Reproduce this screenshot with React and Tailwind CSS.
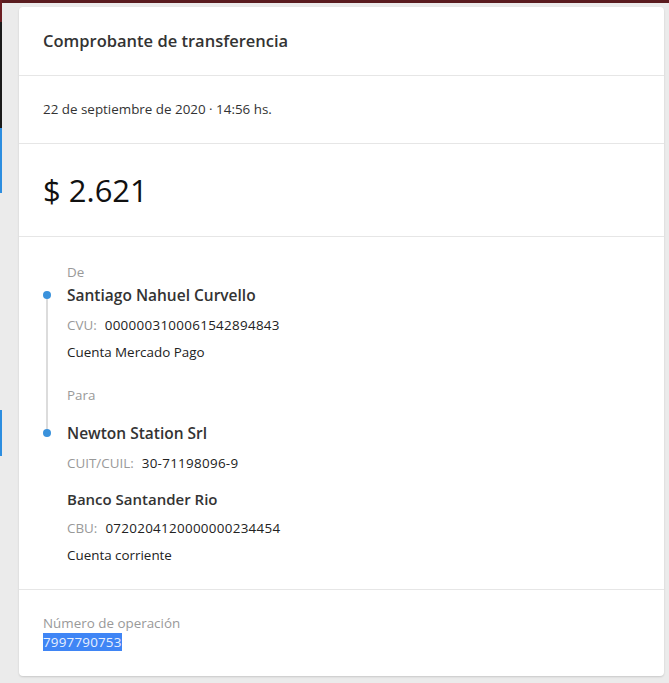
import React from "react";

export default function App() {
  const font = { fontFamily: '"Open Sans", "Liberation Sans", sans-serif' };
  return (
    <div className="w-[669px] h-[683px] bg-[#ebebeb] overflow-hidden relative" style={font}>
      <div className="h-[3px] bg-[#5a1c1f]" />
      <div className="absolute left-0 top-0 w-[2px] h-[22px] bg-[#6b1d22]" />
      <div className="absolute left-0 top-[22px] w-[2px] h-[106px] bg-[#1a1a1a]" />
      <div className="absolute left-0 top-[128px] w-[2px] h-[65px] bg-[#2d8ee0]" />
      <div className="absolute left-0 top-[410px] w-[2px] h-[46px] bg-[#2d8ee0]" />
      <div className="ml-[19px] mt-[4px] w-[645px] h-[669px] bg-white rounded-[4px] shadow-[0_1px_2px_rgba(0,0,0,0.15)] flex flex-col">
        <div className="h-[69px] border-b border-[#e6e6e6] flex items-center px-[24px] text-[16.5px] font-semibold text-[#333]">
          Comprobante de transferencia
        </div>
        <div className="h-[68px] border-b border-[#e6e6e6] flex items-center px-[24px] text-[13.4px] text-[#333]">
          22 de septiembre de 2020 · 14:56 hs.
        </div>
        <div className="h-[93px] border-b border-[#e6e6e6] flex items-center px-[24px] text-[31px] text-[#111]">
          $ 2.621
        </div>
        <div className="h-[353px] border-b border-[#e6e6e6] relative pl-[48px] pt-[26px]">
          <div className="absolute left-[27px] top-[56px] w-[2px] h-[138px] bg-[#dcdcdc]" />
          <div className="text-[13.4px] text-[#999] leading-[18px]">De</div>
          <div className="relative mt-[3px] text-[15.5px] font-semibold text-[#333] leading-[22px]">
            <span className="absolute left-[-24px] top-[7px] w-[8px] h-[8px] rounded-full bg-[#3a92dc]" />
            Santiago Nahuel Curvello
          </div>
          <div className="mt-[10px] text-[13.4px] leading-[18px]">
            <span className="text-[#999]">CVU:</span>
            <span className="ml-[8px] text-[#222] tracking-[0.3px]">0000003100061542894843</span>
          </div>
          <div className="mt-[9px] text-[13.4px] leading-[18px] text-[#222]">Cuenta Mercado Pago</div>
          <div className="mt-[25px] text-[13.4px] text-[#999] leading-[18px]">Para</div>
          <div className="relative mt-[18px] text-[15.5px] font-semibold text-[#333] leading-[22px]">
            <span className="absolute left-[-24px] top-[7px] w-[8px] h-[8px] rounded-full bg-[#3a92dc]" />
            Newton Station Srl
          </div>
          <div className="mt-[10px] text-[13.4px] leading-[18px]">
            <span className="text-[#999]">CUIT/CUIL:</span>
            <span className="ml-[8px] text-[#222] tracking-[0.3px]">30-71198096-9</span>
          </div>
          <div className="mt-[16px] text-[15px] font-semibold text-[#333] leading-[22px]">Banco Santander Rio</div>
          <div className="mt-[9px] text-[13.4px] leading-[18px]">
            <span className="text-[#999]">CBU:</span>
            <span className="ml-[8px] text-[#222] tracking-[0.3px]">0720204120000000234454</span>
          </div>
          <div className="mt-[9px] text-[13.4px] leading-[18px] text-[#222]">Cuenta corriente</div>
        </div>
        <div className="flex-1 px-[24px] pt-[24px]">
          <div className="text-[13.4px] text-[#999] leading-[18px]">Número de operación</div>
          <div className="mt-[1px] text-[13.4px] leading-[18px]">
            <span className="bg-[#3f85f5] text-[#e8f0ff] tracking-[0.2px]">7997790753</span>
          </div>
        </div>
      </div>
    </div>
  );
}
